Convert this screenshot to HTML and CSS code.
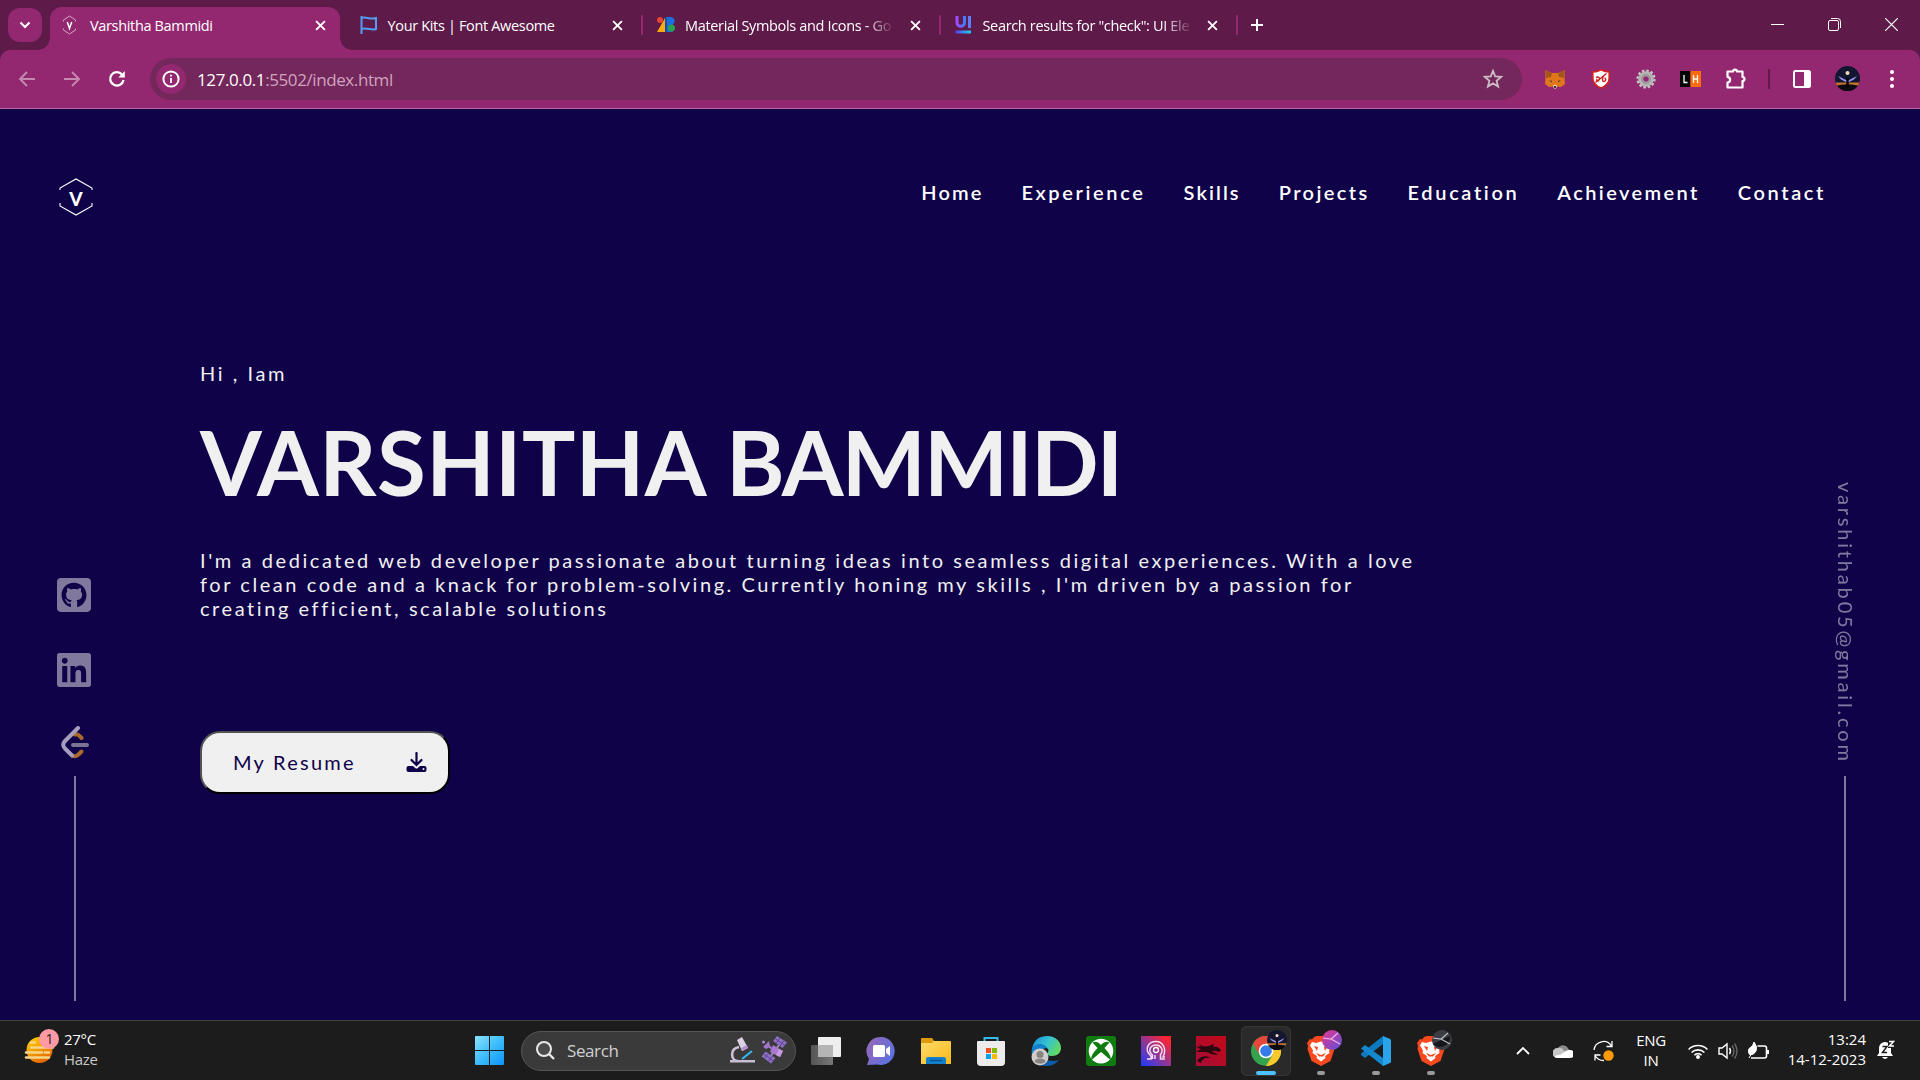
FILE: index.html
```html
<!DOCTYPE html>
<html lang="en">
<head>
<meta charset="utf-8">
<title>Varshitha Bammidi</title>
<link rel="stylesheet" href="styles.css">
</head>
<body>
<div class="browser">
<div class="tabstrip">
  <div class="tab-search"><svg width="12" height="8" viewBox="0 0 12 8"><path d="M1.5 1.5 6 6l4.500-4.500" fill="none" stroke="#fff" stroke-width="2"/></svg></div>
  <div class="tabs">
    <div class="tab active">
      <svg class="fav" viewBox="0 0 18 20"><path d="M1.500 6.500V5L7.500 1l6 4v1.500M1.500 13.500V15l6 4 6-4v-1.500" fill="none" stroke="#d9a5c6" stroke-width="1"/><path d="m5.300 7 2.200 6.500L9.700 7" fill="none" stroke="#fff" stroke-width="1.500"/></svg>
      <span class="t">Varshitha Bammidi</span>
      <svg class="x" viewBox="0 0 10 10"><path d="m1 1 8 8M9 1 1 9"/></svg>
    </div>
    <div class="tab">
      <svg class="fav" viewBox="0 0 18 18"><path d="M1.500 0v18M1.500 2c4-2 8 2 14.500 0v11c-5 2-8-2-14.500 0" fill="none" stroke="#559cf0" stroke-width="2"/></svg>
      <span class="t">Your Kits | Font Awesome</span>
      <svg class="x" viewBox="0 0 10 10"><path d="m1 1 8 8M9 1 1 9"/></svg>
    </div>
    <div class="tab">
      <svg class="fav" viewBox="0 0 18 18"><path d="M8 2h3v14H0z" fill="#fbab0a"/><path d="M9 1h5.500a4 4 0 0 1 1 7.500A4 4 0 0 1 14 16H9z" fill="#1a6fe0"/><circle cx="3" cy="4" r="3" fill="#e94335"/><circle cx="14.500" cy="12" r="3.600" fill="#2ba24c"/><path d="M8 2h2v14H8z" fill="#174ea6"/></svg>
      <span class="t fade">Material Symbols and Icons - Go</span>
      <svg class="x" viewBox="0 0 10 10"><path d="m1 1 8 8M9 1 1 9"/></svg>
    </div>
    <div class="tab">
      <svg class="fav" viewBox="0 0 18 18"><defs><linearGradient id="ui" x2="1"><stop stop-color="#a04bff"/><stop offset="1" stop-color="#3f7bff"/></linearGradient><linearGradient id="ui2" x2="1"><stop stop-color="#5b3df5"/><stop offset="1" stop-color="#17d4e6"/></linearGradient></defs><path d="M2 0v6.500a3.700 3.700 0 0 0 7.500 0V0" fill="none" stroke="url(#ui)" stroke-width="3"/><path d="M13 0h3v12h-3z" fill="#5d7cff"/><path d="M.5 14.500H16v3H.5z" fill="url(#ui2)"/></svg>
      <span class="t fade">Search results for "check": UI Ele</span>
      <svg class="x" viewBox="0 0 10 10"><path d="m1 1 8 8M9 1 1 9"/></svg>
    </div>
    <svg class="plus" viewBox="0 0 14 14"><path d="M7 1v12M1 7h12"/></svg>
  </div>
  <div class="winctl">
    <svg width="13" height="13"><path d="M0 6.500h13" stroke="#fff"/></svg>
    <svg width="13" height="13" fill="none" stroke="#fff"><rect x=".5" y="2.500" width="10" height="10" rx="1.500"/><path d="M3 .5h6.500a3 3 0 0 1 3 3V10"/></svg>
    <svg width="13" height="13"><path d="m0 0 13 13M13 0 0 13" stroke="#fff" stroke-width="1.200"/></svg>
  </div>
</div>
<div class="toolbar">
  <svg class="nv dim" viewBox="0 0 18 18"><path d="M17 9H2M9 2 2 9l7 7"/></svg>
  <svg class="nv dim" viewBox="0 0 18 18"><path d="M1 9h15M9 2l7 7-7 7"/></svg>
  <svg class="nv" viewBox="0 0 18 18"><path d="M15.500 10A6.700 6.700 0 1 1 14 4.500" stroke-width="2.300"/><path d="M16.800 1v6.500h-6.500z" fill="#fff" stroke="none"/></svg>
  <div class="omni">
    <div class="info"><svg width="18" height="18" viewBox="0 0 18 18"><circle cx="9" cy="9" r="7.600" fill="none" stroke="#fff" stroke-width="2"/><path d="M9 8v5M9 4.800v1.800" stroke="#fff" stroke-width="1.800"/></svg></div>
    <span class="url">127.0.0.1<i>:5502/index.html</i></span>
    <svg class="star" viewBox="0 0 20 20"><path d="m10 1.800 2.200 5.600 6 .4-4.600 3.900 1.500 5.900L10 14.400l-5.100 3.200 1.500-5.900L1.800 7.800l6-.4z" fill="none" stroke="#cdbcc7" stroke-width="1.800"/></svg>
  </div>
  <div class="ext">
    <svg width="20" height="19" viewBox="0 0 20 19"><path d="m0 0 7 3h6l7-3-.5 9 .5 5-4 3-4-.5-1 1.500H9L8 16.500 4 17l-4-3 .5-5z" fill="#e2761b"/><path d="m0 0 7 3-1 4-5 1zM20 0l-7 3 1 4 5 1z" fill="#a3561c"/><path d="m4 10 3 1v1.500zM16 10l-3 1v1.500z" fill="#333"/><path d="m8 16 1-1h2l1 1-1 2.500H9z" fill="#e8e2da"/><path d="M8.800 16h2.400l-.5 2H9.300z" fill="#222"/></svg>
    <svg width="20" height="20" viewBox="0 0 20 20"><path d="M10 .8C7 2.500 4.500 3 1.800 3v6c0 5 3.200 8 8.200 10 5-2 8.200-5 8.200-10V3C15.500 3 13 2.500 10 .8z" fill="#fff" stroke="#d2201e" stroke-width="1.600"/><path d="m4.500 13.500 11-9M5 8.500c3-1.500 4 .5 3 2.500s-3 1-2-1M13 6.500c-2 2-2 6 0 6s2.500-3 .5-3.500" fill="none" stroke="#c8211e" stroke-width="1.400"/></svg>
    <svg width="20" height="20" viewBox="0 0 20 20"><circle cx="10" cy="10" r="8.400" fill="none" stroke="#c7c7c7" stroke-width="2.400" stroke-dasharray="2.500 1.900"/><circle cx="10" cy="10" r="5.300" fill="none" stroke="#b4b4b4" stroke-width="5"/><circle cx="10" cy="10" r="4.200" fill="none" stroke="#777" stroke-width=".8"/></svg>
    <svg width="21" height="16" viewBox="0 0 21 16"><path d="M0 0h10.500v16H0z" fill="#050505"/><path d="M10.500 0H21v16H10.500z" fill="#ff6c0a"/><path d="M4 4v7.500h3.500M13.500 4v8m4-8v8m-4-4h4" fill="none" stroke="#fff" stroke-width="1.300"/></svg>
    <svg width="22" height="22" viewBox="0 0 22 22"><path d="M2.500 3.500h5.600a1.900 1.900 0 0 1 3.800 0h5.600v5.500a2 2 0 0 1 0 4v6.500h-15v-4.800c3.500-.7 3.500-5.200 0-5.900z" fill="none" stroke="#fff" stroke-width="2.200" stroke-linejoin="round"/></svg>
    <i class="vline"></i>
    <svg width="18" height="18" viewBox="0 0 18 18"><rect x="1" y="1" width="16" height="16" rx="1.500" fill="none" stroke="#fff" stroke-width="2"/><path d="M11 1h6v16h-6z" fill="#fff"/></svg>
    <svg class="up" width="25" height="25" viewBox="0 0 25 25"><use href="#av"/></svg>
    <svg width="6" height="18" viewBox="0 0 6 18" fill="#fff"><circle cx="3" cy="2" r="2"/><circle cx="3" cy="9" r="2"/><circle cx="3" cy="16" r="2"/></svg>
  </div>
</div>
</div>

<main class="page">
  <header class="head">
    <svg class="logo" viewBox="0 0 34 38"><path d="M1 12V10L17 1l16 9v2M1 25v3l16 9 16-9v-3" fill="none" stroke="#fff" stroke-width="1.100"/><text x="17" y="28" text-anchor="middle">V</text></svg>
    <nav class="menu"><a>Home</a><a class="wide">Experience</a><a>Skills</a><a class="mid">Projects</a><a class="wide">Education</a><a class="mid">Achievement</a><a class="wide">Contact</a></nav>
  </header>
  <aside class="side">
    <svg class="soc" viewBox="0 32 448 448"><path d="M400 32H48C21.500 32 0 53.500 0 80v352c0 26.500 21.500 48 48 48h352c26.500 0 48-21.500 48-48V80c0-26.500-21.500-48-48-48zM277.300 415.700c-8.400 1.500-11.500-3.700-11.500-8 0-5.400.2-33 .2-55.300 0-15.600-5.200-25.500-11.300-30.700 37-4.100 76-9.200 76-73.100 0-18.200-6.500-27.300-17.100-39 1.700-4.300 7.400-22-1.700-45-13.900-4.300-45.700 17.900-45.700 17.900-13.200-3.700-27.500-5.600-41.600-5.600-14.100 0-28.400 1.900-41.600 5.600 0 0-31.800-22.200-45.700-17.900-9.100 22.900-3.500 40.600-1.700 45-10.600 11.700-15.600 20.800-15.600 39 0 63.600 37.300 69 74.300 73.100-4.800 4.300-9.100 11.700-10.600 22.300-9.500 4.300-33.800 11.700-48.300-13.900-9.100-15.800-25.500-17.100-25.500-17.100-16.200-.2-1.100 10.200-1.100 10.200 10.800 5 18.400 24.200 18.400 24.200 9.700 29.700 56.100 19.700 56.100 19.700 0 13.900.2 36.500.2 40.600 0 4.300-3 9.500-11.500 8-66-22.100-112.200-84.900-112.200-158.300 0-91.800 70.200-161.500 162-161.500S388 165.600 388 257.400c.1 73.400-44.700 136.300-110.700 158.300z"/></svg>
    <svg class="soc" viewBox="0 32 448 448"><path d="M416 32H31.900C14.300 32 0 46.500 0 64.300v383.400C0 465.500 14.300 480 31.900 480H416c17.600 0 32-14.500 32-32.300V64.300c0-17.800-14.400-32.300-32-32.300zM135.400 416H69V202.200h66.500V416zm-33.200-243c-21.300 0-38.500-17.300-38.500-38.500S80.900 96 102.200 96c21.200 0 38.500 17.300 38.500 38.500 0 21.300-17.200 38.500-38.500 38.500zm282.100 243h-66.400V312c0-24.800-.5-56.700-34.500-56.700-34.600 0-39.900 27-39.900 54.900V416h-66.400V202.200h63.700v29.200h.9c8.900-16.800 30.600-34.500 62.900-34.500 67.200 0 79.700 44.300 79.700 101.900V416z"/></svg>
    <svg class="leet" viewBox="0 0 28 33" fill="none" stroke-width="4" stroke-linecap="round" stroke-linejoin="round"><path d="M14 8.500c3-1 4.500 1.500 6.500 3.500M12 30c4 1.500 6-2 8.500-4.500" stroke="#aa6a2e"/><path d="M12 19h14" stroke="#7d7396"/><path d="M17 2 4 15c-2.500 2.500-2.500 5 0 7.500l7 7" stroke="#a69dbd"/></svg>
    <i class="rule"></i>
  </aside>
  <section class="hero">
    <p class="hi">Hi , Iam</p>
    <h1><span class="first">VARSHITHA </span><span class="last">BAMMIDI</span></h1>
    <p class="bio">I'm a dedicated web developer passionate about turning ideas into seamless digital experiences. With a love<br>for clean code and a knack for problem-solving. Currently honing my skills , I'm driven by a passion for<br>creating efficient, scalable solutions</p>
    <button class="resume"><span>My Resume</span><svg width="21" height="21" viewBox="0 0 21 21"><path d="M10.500 1v11M5.500 8l5 5 5-5" fill="none" stroke="#0f0249" stroke-width="2.200" stroke-linecap="round"/><path d="M2.500 14H7l2.200 2q1.300 1 2.600 0L14 14h4.500q2 0 2 2v2q0 2-2 2h-16q-2 0-2-2v-2q0-2 2-2zm15 2a1 1 0 1 0 .01 2 1 1 0 1 0 0-2z" fill="#0f0249" fill-rule="evenodd"/></svg></button>
  </section>
  <aside class="side">
    <span class="mail">varshithab05@gmail.com</span>
    <i class="rule"></i>
  </aside>
</main>

<footer class="taskbar">
  <div class="weather">
    <svg width="36" height="36" viewBox="0 0 36 36"><defs><linearGradient id="sun" x2=".6" y2="1"><stop stop-color="#ffd800"/><stop offset="1" stop-color="#e86400"/></linearGradient></defs><circle cx="15.500" cy="21" r="13" fill="url(#sun)"/><path d="M7 13.500h4M7 18.500h22M2 23.500h16M21 23.500h4M2 28.500h23" stroke="#f4d58a" stroke-width="2.600" stroke-linecap="round"/><circle cx="25" cy="10" r="10" fill="#ff9aa5"/><text x="25.500" y="15" text-anchor="middle">1</text></svg>
    <div><b>27°C</b><span>Haze</span></div>
  </div>
  <svg class="start" viewBox="0 0 29 29"><defs><linearGradient id="win" x2="1" y2="1"><stop stop-color="#8be3ff"/><stop offset=".5" stop-color="#3ebefc"/><stop offset="1" stop-color="#0d92f8"/></linearGradient></defs><path d="M1 0h13v14H0V1q0-1 1-1zM15 0h13q1 0 1 1v13H15zM0 15h14v14H1q-1 0-1-1zM15 15h14v13q0 1-1 1H15z" fill="url(#win)"/></svg>
  <div class="search">
    <svg width="19" height="19" viewBox="0 0 19 19" fill="#4c4c4c" stroke="#e8e8e8" stroke-width="2"><circle cx="8" cy="8" r="7"/><path d="m13 13 5 5" stroke-width="2.400"/></svg>
    <span>Search</span>
    <svg width="58" height="30" viewBox="0 0 58 30"><path d="M9 11C-1 13 1 25 8 25" fill="none" stroke="#cfc3d9" stroke-width="2.600"/><path d="m7 4 5-3 6 11-6 3z" fill="#dcd2e4"/><path d="m11 12 6-3 1 3-5 3z" fill="#b78ed2"/><path d="M0 24h25v2.500H0z" fill="#c9bdd3"/><path d="m12 23 10-8" stroke="#35b6ef" stroke-width="2.200"/><path d="m49 9-9 12" stroke="#9b8bb0" stroke-width="2"/><g id="panel"><path d="m47 0 10 6.500-4.500 5.500-9.500-7z" fill="#8f6fc4"/><path d="m45 2.500 10 7M50 2l-4 5M54 4.500 50 10" stroke="#5d4691"/></g><use href="#panel" x="-11.500" y="15.500"/><path d="m43 9 10 6-3 6-10-5z" fill="#a877d0"/><path d="m49 13 4 2-3 6-4-2z" fill="#c79be2"/><path d="m33 11 6-6 1 6-4 2z" fill="#a174cc"/><circle cx="33.500" cy="6" r="1.500" fill="#b183d8"/><path d="m38 9 4 4" stroke="#a174cc" stroke-width="2"/></svg>
  </div>
  <div class="apps">
    <svg viewBox="0 0 30 30"><defs><linearGradient id="tv" x2="1"><stop stop-color="#555"/><stop offset="1" stop-color="#777"/></linearGradient></defs><path d="M8 1h21q1 0 1 1v18q0 1-1 1H8q-1 0-1-1V2q0-1 1-1z" fill="#eee"/><rect y="9" width="22" height="20" rx="1" fill="url(#tv)"/><path d="M7 9h15v12H7z" fill="#b5b5b5"/></svg>
    <svg viewBox="0 0 30 30"><defs><linearGradient id="ch" x2="1" y2=".6"><stop stop-color="#9a66b5"/><stop offset="1" stop-color="#5d72df"/></linearGradient></defs><path d="M15 1a14 14 0 1 1-4 27.500L1 29l2-6A14 14 0 0 1 15 1z" fill="url(#ch)"/><rect x="7" y="9" width="12" height="12" rx="1.500" fill="#fff"/><path d="m20 13 4-3v10l-4-3z" fill="#fff"/></svg>
    <svg viewBox="0 0 30 30"><defs><linearGradient id="fo" x2="1" y2="1"><stop stop-color="#ffdc6c"/><stop offset="1" stop-color="#f9b816"/></linearGradient></defs><path d="M0 3q0-1 1-1h10l3 4v6H0z" fill="#dd9b0a"/><path d="M0 7h11l2-2h16q1 0 1 1v22H0z" fill="url(#fo)"/><path d="M5 28v-5q0-2 2-2h16q2 0 2 2v5z" fill="#147fcb"/><path d="M9 24.500h12" stroke="#0a5599" stroke-width="1.500"/></svg>
    <svg viewBox="0 0 30 30"><path d="M8.500 7V2h13v5" fill="none" stroke="#35b8ec" stroke-width="2"/><path d="M2 5h26q1 0 1 1v20q0 4-4 4H5q-4 0-4-4V6q0-1 1-1z" fill="#ececec"/><path d="M10 12h5v5h-5z" fill="#f04f23"/><path d="M16 12h5v5h-5z" fill="#7fb900"/><path d="M10 18h5v5h-5z" fill="#05a3ee"/><path d="M16 18h5v5h-5z" fill="#ffb800"/></svg>
    <svg viewBox="0 0 30 30"><defs><linearGradient id="ed" x2="1" y2=".5"><stop offset=".1" stop-color="#1d93dc"/><stop offset=".55" stop-color="#35c3d2"/><stop offset="1" stop-color="#5fd865"/></linearGradient></defs><path d="M1 13C3 3 9 0 16 0c9 0 14 6 14 12 0 5-4 8-9 8-4 0-5-2-4-4 2-3-2-5-5-5-5 0-9 2-11 2z" fill="url(#ed)"/><path d="M1 13c2-5 11-7 15-1-5 0-6 4-4 8 3 5 10 6 16 4-4 5-9 6-13 6C5 30-1 22 1 13z" fill="#0e5ca9"/><path d="M1 13c2-5 11-7 15-1-7 0-9 7-5 14C3 26 0 20 1 13z" fill="#1481cc"/><circle cx="9" cy="21" r="8.500" fill="#cfccc9"/><circle cx="9" cy="18.500" r="3.500" fill="#888481"/><path d="M3.500 26q0-3.500 5.500-3.500t5.500 3.500q-5 3.500-11 0z" fill="#888481"/></svg>
    <svg viewBox="0 0 30 30"><rect width="30" height="30" rx="3" fill="#107c10"/><circle cx="15" cy="15" r="12.300" fill="#fff"/><path d="M6.500 6.500C10 4.500 13 7 15 9c2-2 5-4.500 8.500-2.500l-5 5.500c4 4.500 7 8 6 12l-9.500-8L5.500 24c-1-4 2-7.500 6-12z" fill="#107c10"/><path d="M15 16.500 7 24.500q8 5.500 16 0z" fill="#fff"/></svg>
    <svg viewBox="0 0 30 30"><defs><linearGradient id="pk" y1="1" x2="1" y2="0"><stop stop-color="#183cff"/><stop offset=".45" stop-color="#8b369a"/><stop offset=".9" stop-color="#ff2431"/></linearGradient></defs><path d="M0 0h30v30H0z" fill="url(#pk)"/><path d="M6 23h4v-3C2 13 8 5.500 15 5.500S26 13 22 21h2M11.500 23V19C6 14 10 9 15 9s8 5 4.500 9.500V23H24M14 23v-4" fill="none" stroke="#f4dced" stroke-width="1.500"/><circle cx="15" cy="14" r="2.500" fill="none" stroke="#fff" stroke-width="1.300"/></svg>
    <svg viewBox="0 0 30 30"><defs><linearGradient id="dr" y1="1" x2="1" y2="0"><stop stop-color="#a80d38"/><stop offset="1" stop-color="#c00917"/></linearGradient></defs><path d="M0 0h30v30H0z" fill="url(#dr)"/><path d="M0 5c5 6 9 6 13 5l5-2-1 3c4-1 6 1 8 3l-2 2-5-1.500-2 1 6 3c-4 1-8-1-10-2-4-1-8 0-12-1l5-2-5-3h5zM1 25c3-5 9-6 14-3-6-1-9 1-10 5z" fill="#29090f"/></svg>
    <div class="app on">
      <svg viewBox="0 0 30 30"><circle cx="15" cy="15" r="15" fill="#35a34d"/><path d="M2 7.500A15 15 0 0 1 28 7.500L15 8 8.500 18.800z" fill="#e4483a"/><path d="M28 7.500A15 15 0 0 1 15 30l6.500-11.200L15 7.500z" fill="#fbc72a"/><circle cx="15" cy="15" r="7.300" fill="#fff"/><circle cx="15" cy="15" r="5.800" fill="#347de8"/></svg>
      <svg class="badge" viewBox="0 0 25 25"><g id="av"><circle cx="12.500" cy="12.500" r="12.500" fill="#121630"/><path d="M.8 16.500h23.400l-1 3.200H1.800z" fill="#c4722c"/><path d="M2 19.500c4-1.500 17-1.500 21 0a12.500 12.500 0 0 1-21 0z" fill="#0d0b12"/><circle cx="12.500" cy="7" r="2" fill="#f2d9b4"/><path d="M12 14.500 3 10l3 3.500 6 3zM13 14.500l9-4.500-3 3.500-6 3z" fill="#9d94ee"/><path d="M11.500 11.500h2l.5 10h-3z" fill="#060609"/></g></svg>
      <i class="run long"></i>
    </div>
    <div class="app">
      <svg viewBox="0 0 30 30"><g id="brave"><path d="m8 1 3-1h7l3 1 3 2.500 2-.5 3 4-1 3 .5 3-4 12-9.500 5-9.500-5-4-12L2 10 1 7l3-4 2 .5z" fill="#f7491d"/><path d="m6 6 4 1 5-1.500L20 7l4-1 2 3.500-3 5 .5 2.500-4.500 3 .5 2-4.500 3.500-4.500-3.500.5-2-4.500-3L7 14.500l-3-5z" fill="#fff"/><path d="m8 10 4 1-1 4zM22 10l-4 1 1 4zM10 17l5 2 5-2-3 3.500h-4z" fill="#f7491d"/></g></svg>
      <svg class="badge" viewBox="0 0 20 20"><defs><linearGradient id="pb" x2="1" y2="1"><stop offset=".2" stop-color="#cf3b9c"/><stop offset="1" stop-color="#5851dd"/></linearGradient></defs><circle cx="10" cy="10" r="10" fill="url(#pb)"/><path d="m1 8 8 1 7-6M9 9l9 5" fill="none" stroke="#efb3e0" stroke-width="1.200"/></svg>
      <i class="run"></i>
    </div>
    <div class="app">
      <svg viewBox="0 0 30 30"><path d="M22 0v8L4 22l-4-3v-1.500z" fill="#0d79bf"/><path d="m0 12.500 4-3.500 18 13v8z" fill="#1487cf"/><path d="m22 0 7 3q1 .5 1 1.500v21q0 1-1 1.500l-7 3z" fill="#29a5ee"/></svg>
      <i class="run"></i>
    </div>
    <div class="app">
      <svg viewBox="0 0 30 30"><use href="#brave"/></svg>
      <svg class="badge" viewBox="0 0 20 20"><circle cx="10" cy="10" r="10" fill="#3a3d44"/><path d="M1 14 18 6a10 10 0 0 1-17 8z" fill="#15161a"/><path d="m1 8 8 1 7-6M9 9l9 5" fill="none" stroke="#b9bcc2" stroke-width="1.200"/></svg>
      <i class="run"></i>
    </div>
  </div>
  <div class="tray">
    <svg width="14" height="9" viewBox="0 0 14 9"><path d="m1 8 6-6 6 6" fill="none" stroke="#fff" stroke-width="1.800"/></svg>
    <svg width="20" height="14" viewBox="0 0 20 14"><path d="M5 4a6 6 0 0 1 10.500 1L20 9l-9 3-8-3z" fill="#8b8b8b"/><path d="M4.500 4Q9 3 11 7l7 3-8 4H4.500A4.500 4.500 0 0 1 4.500 4z" fill="#c6c6c6"/><path d="M1 12q8-1 11-4.500 2-2 5-1.500a3.900 3.900 0 0 1 0 8H4q-2 0-3-2z" fill="#fff"/></svg>
    <svg width="21" height="22" viewBox="0 0 21 22"><path d="M1 10A9.500 9.500 0 0 1 18.500 6M19 1v5.500h-5.500M2 20.500V15h5.500M2 15.500a10 10 0 0 0 9 5" fill="none" stroke="#fff" stroke-width="1.300"/><circle cx="15.500" cy="15.500" r="5.200" fill="#ff9a07"/></svg>
    <div class="lang">ENG<br>IN</div>
    <svg width="20" height="16" viewBox="0 0 20 16" fill="none" stroke="#fff" stroke-width="1.600"><path d="M.6 6.500a13.200 13.200 0 0 1 18.800 0M3.600 9.500a9 9 0 0 1 12.800 0M6.400 12.200a5 5 0 0 1 7.200 0"/><circle cx="10" cy="14" r="1.200" fill="#fff"/></svg>
    <svg width="20" height="18" viewBox="0 0 20 18" fill="none" stroke="#fff" stroke-width="1.400"><path d="M1 6h3l5-4v14l-5-4H1zM11.500 6q2 3 0 6"/><path d="M14 3.500q4 5.500 0 11M16.500 1.500q5 7.500 0 15" stroke="#666"/></svg>
    <svg width="21" height="18" viewBox="0 0 21 18"><path d="M9.500 4h7q2 0 2 2v8q0 2-2 2H3" fill="none" stroke="#fff" stroke-width="1.600"/><path d="M19 8h2v4h-2z" fill="#fff"/><path d="M6 0q4 5 2 9-2 4-6 4-4-5 1-8 2-1 3-5zM1 16l3-5" fill="#fff" stroke="#fff"/></svg>
    <div class="clock">13:24<br>14-12-2023</div>
    <svg class="bell" width="18" height="20" viewBox="0 0 18 20"><path d="M8 2a6 6 0 0 1 6 6v5l2 3H0l2-3V8a6 6 0 0 1 6-6zM5 17h6q-3 4-6 0z" fill="#fff"/><path d="M11 0h7v8h-7z" fill="#1c1c1c"/><path d="M5.500 6.500H10l-4.500 6H10" fill="none" stroke="#1c1c1c" stroke-width="1.500"/><path d="M12 1.500h4.500l-4 4.500h4.500" fill="none" stroke="#fff" stroke-width="1.500"/></svg>
  </div>
</footer>
</body>
</html>
```
FILE: styles.css
```css
* { box-sizing: border-box; }
body { margin: 0; width: 1920px; height: 1080px; overflow: hidden; display: flex; flex-direction: column; background: #0f0249; font-family: "Open Sans", "Noto Sans", sans-serif; }
svg { display: block; flex: none; }
i { font-style: normal; }

/* browser window */
.browser { background: #5e1a48; }
.tabstrip { height: 50px; display: flex; }
.tab-search { width: 34px; height: 34px; margin: 8px 8px 0; border-radius: 12px; background: #942870; display: flex; align-items: center; justify-content: center; }
.tabs { display: flex; flex: 1; }
.tab { width: 297.5px; padding: 0 22px 0 12px; display: flex; align-items: center; position: relative; height: 50px; }
.tab:not(.active)::after { content: ""; position: absolute; right: 2px; top: 15px; width: 2px; height: 20px; background: #942870; border-radius: 1px; }
.tab.active::before { content: ""; position: absolute; left: 0; top: 7px; width: 290px; height: 43px; border-radius: 12px 12px 0 0; background: #942870; }
.tab.active::after { content: ""; position: absolute; left: -12px; bottom: 0; width: 314px; height: 12px; background: radial-gradient(circle at 0 0, transparent 11.500px, #942870 12px) left / 12px 12px no-repeat, radial-gradient(circle at 100% 0, transparent 11.500px, #942870 12px) right / 12px 12px no-repeat; }
.tab > * { position: relative; }
.fav { width: 18px; height: 20px; margin-right: 10px; }
.t { width: 213px; height: 22px; margin-top: 2px; font-size: 14.500px; line-height: 22px; letter-spacing: -.34px; color: #fff; white-space: nowrap; }
.fade { -webkit-mask-image: linear-gradient(90deg, #000 180px, transparent 210px); mask-image: linear-gradient(90deg, #000 180px, transparent 210px); }
.x { width: 11px; height: 11px; margin-left: 11.500px; fill: none; stroke: #fff; stroke-width: 1.700; }
.plus { width: 14px; height: 14px; margin: 18px 0 0 10px; fill: none; stroke: #fff; stroke-width: 2; }
.winctl { display: flex; gap: 44px; padding: 18px 22px 0 0; }

.toolbar { height: 59px; padding: 0 6px 0 18px; display: flex; align-items: center; background: #942870; border-bottom: 1px solid #b4679c; border-radius: 10px 10px 0 0; }
.nv { width: 18px; height: 18px; margin-right: 27px; fill: none; stroke: #fff; stroke-width: 1.900; }
.dim { opacity: .45; }
.omni { width: 1372px; height: 42px; margin-left: -3px; border-radius: 21px; background: #73275a; display: flex; align-items: center; padding: 0 19px 0 6px; }
.info { width: 30px; height: 30px; border-radius: 50%; background: #942870; display: flex; align-items: center; justify-content: center; }
.url { flex: 1; margin-left: 11px; font-size: 17px; letter-spacing: -.4px; color: #fff; }
.url i { color: #d0a3c0; }
.star { width: 20px; height: 20px; }
.ext { display: grid; grid-template-columns: 46px 46px 44px 45px 45px 22px 44px 46px 44px; align-items: center; justify-items: center; padding-left: 10px; }
.up { margin-top: -1px; }
.vline { width: 2px; height: 20px; background: #5e1a48; }

/* portfolio page */
.page { height: 911px; display: grid; grid-template: 180px 1fr / 150px 1fr 150px; color: #f0f0f0; font-family: Lato, "Open Sans", sans-serif; }
.head { grid-column: 1 / -1; display: flex; justify-content: space-between; padding: 69px 94px 0 58.500px; }
.logo { width: 34px; height: 38px; }
.logo text { font: 900 19px Lato, sans-serif; fill: #fff; }
.menu { display: flex; gap: 38px; font-size: 20px; line-height: 24px; font-weight: 600; letter-spacing: 2.100px; color: #fff; padding-top: 2px; }
.menu .mid { letter-spacing: 2.400px; }
.menu .wide { letter-spacing: 2.630px; }
.side { display: flex; flex-direction: column; align-items: center; justify-content: flex-end; padding-bottom: 19px; }
.soc, .rule, .mail { opacity: .5; }
.soc { width: 34px; height: 34px; margin: 0 2px 41px 0; fill: #f0f0f0; }
.leet { width: 28px; height: 33px; margin: -2px 0 17px 0; }
.rule { width: 2px; height: 225px; background: #f0f0f0; }
.mail { writing-mode: vertical-rl; font-size: 20px; line-height: 24px; letter-spacing: 2.830px; margin: 0 0 12px 1px; }
.hero { padding: 72px 0 0 50px; letter-spacing: 2.570px; font-size: 20px; line-height: 24px; }
.hero p { margin: 0; }
.hero h1 { margin: 23px 0 32px; font-size: 89px; line-height: 108px; font-weight: 700; white-space: nowrap; }
.first { letter-spacing: .4px; }
.last { letter-spacing: -1.800px; }
.bio { white-space: nowrap; }
.resume { margin-top: 111px; width: 250px; height: 63px; border: 2px outset #000; border-radius: 20px; background: #f0f0f0; display: flex; justify-content: space-between; align-items: center; padding: 0 21px 0 31px; font: 20px Lato, sans-serif; color: #0f0249; letter-spacing: 2.250px; }
.resume span { margin-top: -2px; }

/* desktop taskbar */
.taskbar { height: 60px; background: #1c1c1c; border-top: 1px solid #444; display: flex; color: #fff; font-size: 15px; line-height: 20px; align-items: center; }
.weather { width: 475px; padding-left: 24px; display: flex; gap: 4px; align-items: center; }
.weather svg { margin-top: -8px; }
.weather text { font: 14px "Open Sans", sans-serif; fill: #222; }
.weather div { margin-bottom: 4px; letter-spacing: -.3px; }
.weather b { display: block; font-weight: 400; }
.weather div span { color: #c8c8c8; }
.start { width: 29px; height: 29px; }
.search { width: 275px; height: 40px; margin-left: 17px; border-radius: 20px; background: #3a3a3a; border: 1px solid #555; display: flex; align-items: center; padding: 0 7px 0 14px; }
.search span { flex: 1; margin-left: 12px; font-size: 17px; letter-spacing: -.4px; color: #d0d0d0; }
.apps { margin-left: 2.500px; display: grid; grid-template-columns: repeat(12, 55px); align-items: center; justify-items: center; }
.apps svg { width: 30px; height: 30px; }
.app { width: 50px; height: 50px; position: relative; display: flex; align-items: center; justify-content: center; }
.on { background: #2a2a2a; border-radius: 6px; box-shadow: inset 0 0 0 1px #363636; }
.apps .badge { position: absolute; width: 20px; height: 20px; right: 4px; top: 4px; }
.run { position: absolute; bottom: 1px; width: 8px; height: 4px; border-radius: 2px; background: #999; }
.long { width: 20px; background: #4cc2ff; }
.tray { margin-left: 41.500px; display: grid; grid-template-columns: 46px 34px 46px 57px 30px 30px 30px 93px 40px; align-items: center; justify-items: center; }
.lang { text-align: center; margin: 0 0 2px -7px; letter-spacing: -.3px; }
.clock { justify-self: end; text-align: right; margin-bottom: 4px; }
.bell { margin-top: -2px; }
```
